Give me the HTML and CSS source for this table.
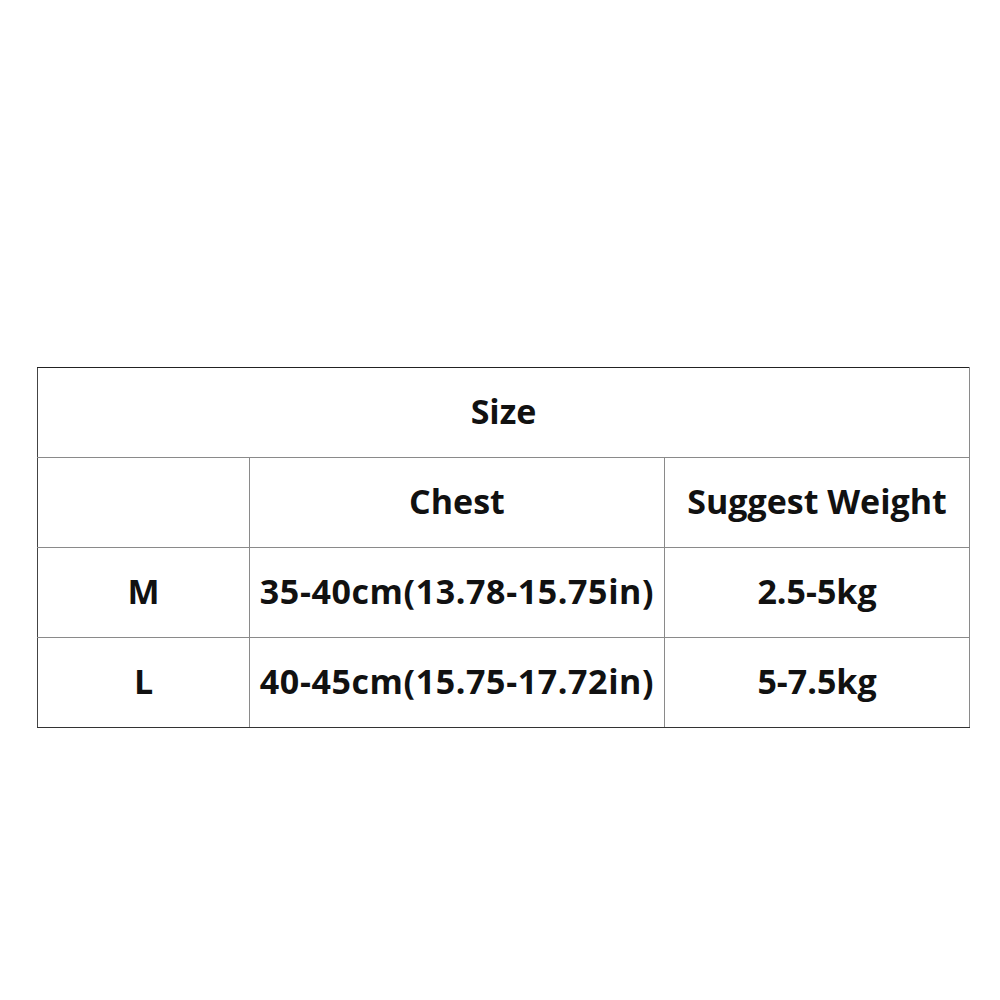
FILE: index.html
```html
<!DOCTYPE html>
<html>
<head>
<meta charset="utf-8">
<link rel="stylesheet" href="styles.css">
</head>
<body>
<div class="page">
  <table class="size-table">
    <colgroup>
      <col class="c1"><col class="c2"><col class="c3">
    </colgroup>
    <tr><td colspan="3" class="title">Size</td></tr>
    <tr><td></td><td>Chest</td><td>Suggest Weight</td></tr>
    <tr><td>M</td><td class="num">35-40cm(13.78-15.75in)</td><td>2.5-5kg</td></tr>
    <tr class="last"><td>L</td><td class="num">40-45cm(15.75-17.72in)</td><td>5-7.5kg</td></tr>
  </table>
</div>
</body>
</html>
```
FILE: styles.css
```css
html, body {
  margin: 0;
  padding: 0;
  background: #fff;
}
.page {
  width: 1000px;
  height: 1000px;
  padding-top: 367px;
  padding-left: 37px;
  box-sizing: border-box;
}
.size-table {
  border-collapse: collapse;
  width: 932px;
  table-layout: fixed;
  font-family: "Open Sans", "Noto Sans", sans-serif;
  font-weight: 700;
  font-size: 34px;
  color: #111;
}
.c1 { width: 212px; }
.c2 { width: 415px; }
.c3 { width: 305px; }
.size-table td {
  height: 85px;
  padding: 0 0 4px 0;
  text-align: center;
  vertical-align: middle;
  border: 1px solid #8a8a8a;
  white-space: nowrap;
}
.size-table td.num {
  letter-spacing: 0.6px;
}
.size-table tr:first-child td {
  border-top-color: #222;
}
.size-table td:first-child {
  border-left-color: #444;
}
.size-table tr.last td {
  border-bottom-color: #333;
}
```
